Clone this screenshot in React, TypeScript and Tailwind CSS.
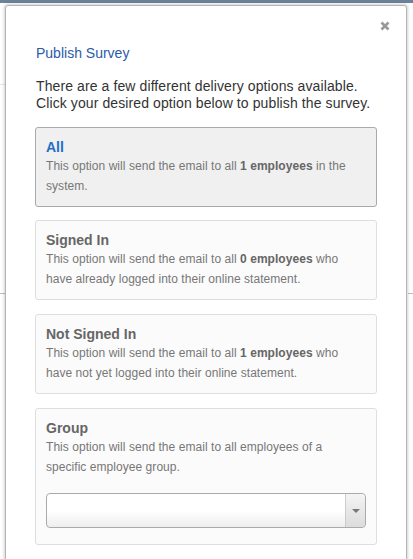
import React from "react";

type Opt = { title: string; active?: boolean; body: React.ReactNode; select?: boolean };

const opts: Opt[] = [
  {
    title: "All",
    active: true,
    body: (
      <>
        This option will send the email to all <b className="text-[#666]">1 employees</b> in the system.
      </>
    ),
  },
  {
    title: "Signed In",
    body: (
      <>
        This option will send the email to all <b className="text-[#666]">0 employees</b> who have already logged into their online statement.
      </>
    ),
  },
  {
    title: "Not Signed In",
    body: (
      <>
        This option will send the email to all <b className="text-[#666]">1 employees</b> who have not yet logged into their online statement.
      </>
    ),
  },
  {
    title: "Group",
    body: <>This option will send the email to all employees of a specific employee group.</>,
    select: true,
  },
  { title: "Custom", body: <>This option will send the email to selected employees.</> },
];

export default function App() {
  return (
    <div
      className="relative w-[413px] h-[559px] overflow-hidden bg-white"
      style={{ fontFamily: '"Liberation Sans", Arial, sans-serif' }}
    >
      <div className="absolute left-0 top-0 w-full h-[3px] bg-[#6b8099]" />
      <div className="absolute left-0 top-[84px] w-[5px] h-px bg-[#e6e6e6]" />
      <div className="absolute left-0 top-[293px] w-[5px] h-px bg-[#bdbdbd]" />
      <div className="absolute right-0 top-[293px] w-[5px] h-px bg-[#bdbdbd]" />
      <div className="relative mt-[5px] ml-[5px] w-[402px] border border-[#b5b5b5] bg-white shadow-[0_0_3px_1px_rgba(0,0,0,0.18)] rounded-t-[3px]">
        <button className="absolute right-[16px] top-[15px] leading-none" aria-label="close">
          <svg width="10" height="10" viewBox="0 0 10 10">
            <path d="M1.5 1.5 L8.5 8.5 M8.5 1.5 L1.5 8.5" stroke="#999" strokeWidth="2.6" strokeLinecap="butt" />
          </svg>
        </button>
        <div className="pt-[37px] pl-[30px] pr-[29px]">
          <div className="text-[14px] leading-[20px] text-[#2c5aa8]">Publish Survey</div>
          <p className="mt-[15px] text-[14px] leading-[17px] tracking-[0.1px] text-[#333]">
            There are a few different delivery options available.
            <br />
            Click your desired option below to publish the survey.
          </p>
          <div className="mt-[15px] -ml-px flex flex-col">
            {opts.map((o, i) => (
              <div
                key={o.title}
                className={
                  (i === 0 ? "" : i === 1 ? "mt-[13px] " : "mt-[14px] ") +
                  (o.active
                    ? "rounded-[3px] border border-[#a9a9a9] bg-[#f0f0f0] px-[10px] pt-[10px] pb-[10px]"
                    : "rounded-[3px] border border-[#dedede] bg-[#fbfbfb] px-[10px] pt-[10px] pb-[10px]")
                }
              >
                <div
                  className={
                    o.active
                      ? "text-[14px] font-bold leading-[18px] text-[#1f6fc6]"
                      : "text-[14px] font-bold leading-[18px] text-[#666]"
                  }
                >
                  {o.title}
                </div>
                <div className="pr-[8px] text-[12px] leading-[20px] tracking-[0.05px] text-[#777]">{o.body}</div>
                {o.select && (
                  <div className="mt-[16px] mb-[6px] flex h-[35px] rounded-[4px] border border-[#aaa] bg-gradient-to-b from-white from-50% to-[#eeeeee]">
                    <div className="flex-1" />
                    <div className="flex w-[20px] items-center justify-center border-l border-[#ccc] bg-gradient-to-b from-[#f4f4f4] to-[#dcdcdc] rounded-r-[4px]">
                      <div className="h-0 w-0 border-l-[4px] border-r-[4px] border-t-[4px] border-l-transparent border-r-transparent border-t-[#777]" />
                    </div>
                  </div>
                )}
              </div>
            ))}
          </div>
        </div>
      </div>
    </div>
  );
}
